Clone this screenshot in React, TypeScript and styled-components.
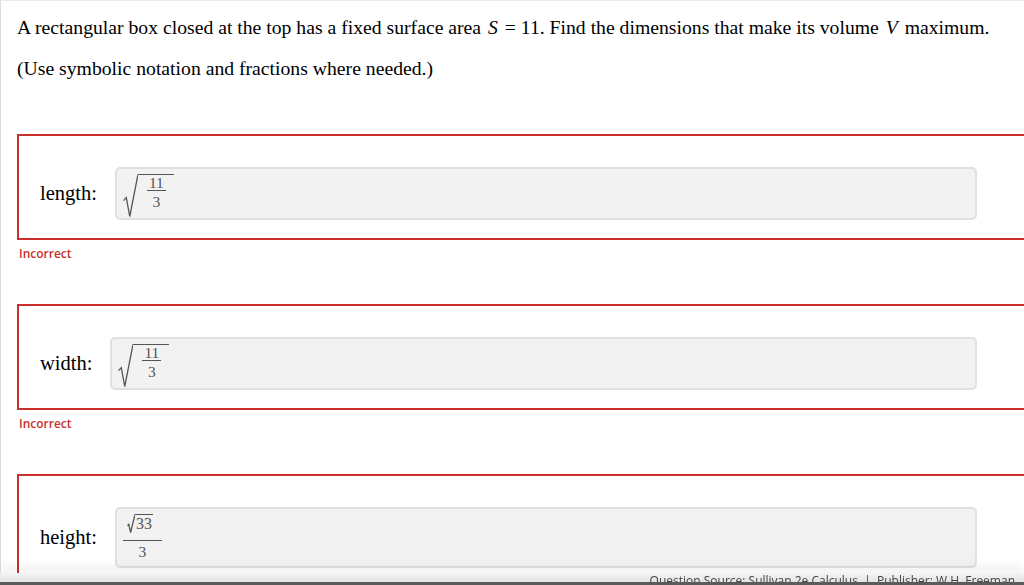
import React, { FunctionComponent } from 'react';
import styled, { createGlobalStyle } from 'styled-components';

const GlobalStyle = createGlobalStyle`
  html, body {
    margin: 0;
    padding: 0;
    background: #fff;
    overflow: hidden;
  }
  body {
    font-family: "Liberation Serif", "Times New Roman", serif;
    color: #000;
  }
`;

const Page = styled.div`
  border-left: 1px solid #dcdcdc;
  border-top: 1px solid #ececec;
  padding: 15px 0 0 16px;
  min-height: 585px;
  box-sizing: border-box;
`;

const Question = styled.p`
  margin: 0;
  font-size: 19.7px;
  line-height: 22px;
  white-space: nowrap;
  & + & {
    margin-top: 19px;
  }
`;

const Var = styled.i`
  font-style: italic;
  margin: 0 2px;
`;

const Fields = styled.div`
  margin-top: 55px;
`;

const FieldBox = styled.div`
  width: 1030px;
  box-sizing: border-box;
  border: 2px solid #c9302c;
  padding: 31px 68px 18px 21px;
  display: flex;
  align-items: center;
  gap: 18px;
`;

const Label = styled.span`
  font-size: 20.5px;
  white-space: nowrap;
`;

const AnswerInput = styled.div<{ $pad?: number }>`
  flex: 1;
  background: #f2f2f2;
  border: 2px solid #e0e0e0;
  border-radius: 5px;
  padding: 5px 8px ${(p) => p.$pad ?? 1}px 6px;
  display: flex;
  align-items: flex-start;
  color: #555;
`;

const Feedback = styled.div`
  font-family: "Open Sans", "Liberation Sans", sans-serif;
  font-size: 12px;
  font-weight: 600;
  line-height: 16px;
  color: #c9302c;
  margin: 6px 0 42px 2px;
`;

const SqrtWrap = styled.span`
  display: inline-flex;
  align-items: flex-start;
`;

const Radicand = styled.span`
  border-top: 1px solid #555;
  padding: 0 8px 0 9px;
  display: inline-flex;
`;

const Frac = styled.span`
  display: inline-flex;
  flex-direction: column;
  align-items: center;
  font-size: 15.5px;
`;

const Num = styled.span<{ $wide?: boolean }>`
  line-height: 15px;
  padding: ${(p) => (p.$wide ? '0 9px 5px 4px' : '0 2px')};
  border-bottom: 1px solid #555;
`;

const Den = styled.span`
  line-height: 15px;
  margin-top: 3px;
`;

const Radical: FunctionComponent<{ h: number; w: number }> = ({ h, w }) => (
  <svg width={w} height={h} viewBox={`0 0 ${w} ${h}`} style={{ display: 'block', flexShrink: 0 }}>
    <path
      d={`M0.5 ${h * 0.62} L${w * 0.22} ${h * 0.55} L${w * 0.45} ${h - 0.5} L${w} 0.5`}
      fill="none"
      stroke="#555"
      strokeWidth={1.3}
    />
  </svg>
);

const SmallRoot = styled.span`
  display: inline-flex;
  align-items: flex-start;
  font-size: 16px;
`;

const SmallRadicand = styled.span`
  border-top: 1px solid #555;
  line-height: 17px;
  padding: 0 1px;
`;

const Dock = styled.div`
  position: fixed;
  left: 0;
  right: 0;
  bottom: 0;
  height: 12px;
  overflow: hidden;
  background: linear-gradient(#f4f4f4, #dedede);
  box-shadow: 0 -8px 10px rgba(0, 0, 0, 0.05);
  &::after {
    content: '';
    position: absolute;
    left: 0;
    right: 0;
    bottom: 0;
    height: 3px;
    background: #5b5b5b;
  }
`;

const Source = styled.div`
  font-family: "Open Sans", "Liberation Sans", sans-serif;
  font-size: 12px;
  line-height: 15px;
  color: #444;
  text-align: right;
  padding-right: 9px;
  white-space: pre;
`;

const SqrtElevenThirds = () => (
  <SqrtWrap>
    <Radical w={15} h={43} />
    <Radicand>
      <Frac>
        <Num>11</Num>
        <Den>3</Den>
      </Frac>
    </Radicand>
  </SqrtWrap>
);

const App = () => (
  <>
    <GlobalStyle />
    <Page>
      <Question>
        A rectangular box closed at the top has a fixed surface area <Var>S</Var> = 11. Find the dimensions that make its
        volume <Var>V</Var> maximum.
      </Question>
      <Question>(Use symbolic notation and fractions where needed.)</Question>

      <Fields>
        <FieldBox>
          <Label>length:</Label>
          <AnswerInput>
            <SqrtElevenThirds />
          </AnswerInput>
        </FieldBox>
        <Feedback>Incorrect</Feedback>

        <FieldBox>
          <Label>width:</Label>
          <AnswerInput>
            <SqrtElevenThirds />
          </AnswerInput>
        </FieldBox>
        <Feedback>Incorrect</Feedback>

        <FieldBox>
          <Label>height:</Label>
          <AnswerInput $pad={7}>
            <Frac>
              <Num $wide>
                <SmallRoot>
                  <Radical w={8} h={19} />
                  <SmallRadicand>33</SmallRadicand>
                </SmallRoot>
              </Num>
              <Den>3</Den>
            </Frac>
          </AnswerInput>
        </FieldBox>
      </Fields>
    </Page>
    <Dock>
      <Source>Question Source: Sullivan 2e Calculus  |  Publisher: W.H. Freeman</Source>
    </Dock>
  </>
);

export default App;
